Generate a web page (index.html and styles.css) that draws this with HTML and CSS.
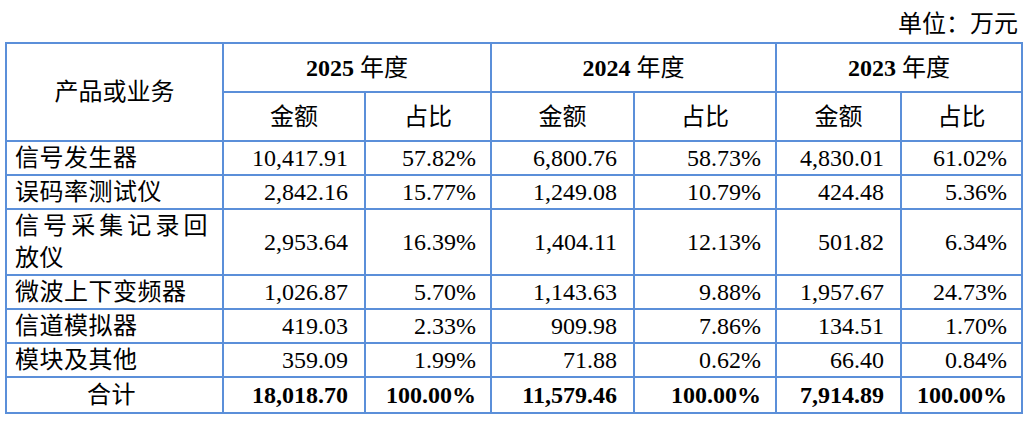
FILE: index.html
```html
<!DOCTYPE html>
<html lang="zh-CN">
<head>
<meta charset="utf-8">
<title>主营业务收入构成</title>
<link rel="stylesheet" href="styles.css">
</head>
<body>
<div class="page">
  <div class="unit">单位：万元</div>
  <table class="data">
    <colgroup>
      <col class="c-name">
      <col class="c-amt1">
      <col class="c-pct1">
      <col class="c-amt2">
      <col class="c-pct2">
      <col class="c-amt3">
      <col class="c-pct3">
    </colgroup>
    <thead>
      <tr class="h1">
        <th rowspan="2" class="name-head">产品或业务</th>
        <th colspan="2"><b>2025</b> 年度</th>
        <th colspan="2"><b>2024</b> 年度</th>
        <th colspan="2"><b>2023</b> 年度</th>
      </tr>
      <tr class="h2">
        <th>金额</th><th>占比</th>
        <th>金额</th><th>占比</th>
        <th>金额</th><th>占比</th>
      </tr>
    </thead>
    <tbody>
      <tr>
        <td class="name">信号发生器</td>
        <td class="amt">10,417.91</td><td class="pct">57.82%</td>
        <td class="amt">6,800.76</td><td class="pct">58.73%</td>
        <td class="amt">4,830.01</td><td class="pct">61.02%</td>
      </tr>
      <tr>
        <td class="name">误码率测试仪</td>
        <td class="amt">2,842.16</td><td class="pct">15.77%</td>
        <td class="amt">1,249.08</td><td class="pct">10.79%</td>
        <td class="amt">424.48</td><td class="pct">5.36%</td>
      </tr>
      <tr>
        <td class="name">信号采集记录回放仪</td>
        <td class="amt">2,953.64</td><td class="pct">16.39%</td>
        <td class="amt">1,404.11</td><td class="pct">12.13%</td>
        <td class="amt">501.82</td><td class="pct">6.34%</td>
      </tr>
      <tr>
        <td class="name">微波上下变频器</td>
        <td class="amt">1,026.87</td><td class="pct">5.70%</td>
        <td class="amt">1,143.63</td><td class="pct">9.88%</td>
        <td class="amt">1,957.67</td><td class="pct">24.73%</td>
      </tr>
      <tr>
        <td class="name">信道模拟器</td>
        <td class="amt">419.03</td><td class="pct">2.33%</td>
        <td class="amt">909.98</td><td class="pct">7.86%</td>
        <td class="amt">134.51</td><td class="pct">1.70%</td>
      </tr>
      <tr>
        <td class="name">模块及其他</td>
        <td class="amt">359.09</td><td class="pct">1.99%</td>
        <td class="amt">71.88</td><td class="pct">0.62%</td>
        <td class="amt">66.40</td><td class="pct">0.84%</td>
      </tr>
      <tr class="total">
        <td class="name center">合计</td>
        <td class="amt"><b>18,018.70</b></td><td class="pct"><b>100.00%</b></td>
        <td class="amt"><b>11,579.46</b></td><td class="pct"><b>100.00%</b></td>
        <td class="amt"><b>7,914.89</b></td><td class="pct"><b>100.00%</b></td>
      </tr>
    </tbody>
  </table>
</div>
</body>
</html>
```

FILE: styles.css
```css
html, body {
  margin: 0;
  padding: 0;
  background: #ffffff;
}

body {
  font-family: "Liberation Serif", "Noto Sans CJK SC", serif;
  color: #000000;
  font-size: 24px;
}

.page {
  padding: 0 7px 0 5px;
  width: 1016px;
}

.unit {
  height: 42px;
  box-sizing: border-box;
  padding-top: 6px;
  padding-right: 3px;
  line-height: 36px;
  text-align: right;
}

.data {
  width: 1016px;
  table-layout: fixed;
  border-collapse: collapse;
}

.c-name { width: 217px; }
.c-amt1 { width: 142px; }
.c-pct1 { width: 126px; }
.c-amt2 { width: 143px; }
.c-pct2 { width: 142px; }
.c-amt3 { width: 125px; }
.c-pct3 { width: 121px; }

.data th,
.data td {
  border: 2px solid #5b8fd9;
  padding: 0;
  line-height: 32px;
}

.data th {
  font-weight: normal;
  text-align: center;
}

.data th b {
  font-weight: bold;
}

.h1 th,
.h2 th {
  height: 47px;
}

.name-head {
  padding-top: 2px;
}

.data td.name {
  text-align: justify;
  letter-spacing: 0.5px;
  padding: 0 14px 0 8px;
}

.data td.center {
  text-align: center;
}

.data td.amt {
  text-align: right;
  padding-right: 16px;
}

.data td.pct {
  text-align: right;
  padding-right: 14px;
}

.total td {
  height: 34px;
}

.total b {
  font-weight: bold;
}
```
